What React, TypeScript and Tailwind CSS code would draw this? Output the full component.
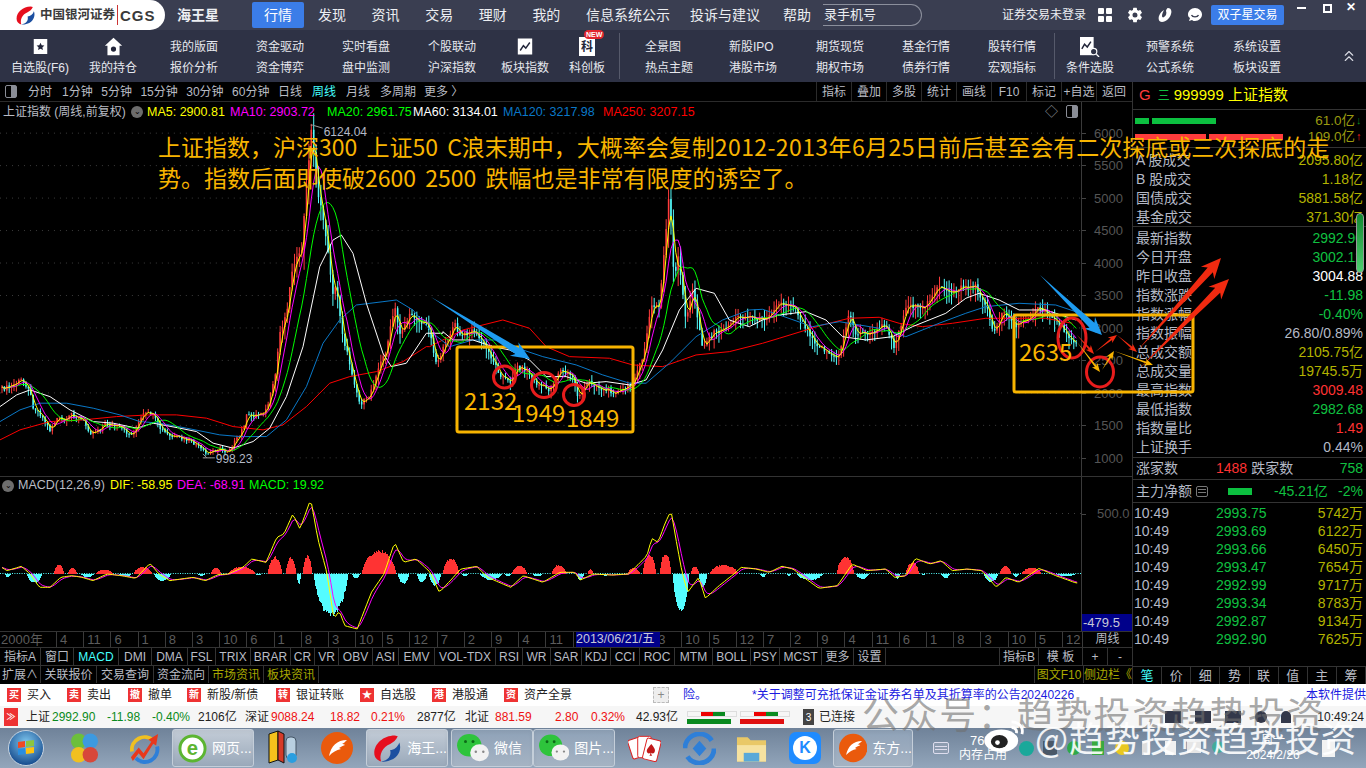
import { IoSettingsSharp } from "react-icons/io5";
import { ChevronsUp } from "lucide-react";

type Pt = [number, number];

// key points read from the chart, in page pixels
const seg = (ox: number, oy: number, pts: number[][]): Pt[] =>
  pts.map(([x, y]) => [ox + x / 3, oy + y / 3] as Pt);

const priceKeys: Pt[] = [
  ...seg(0, 120, [[0,810],[30,800],[65,780],[85,800],[100,860],[120,880],[150,930],[170,895],[200,905],[215,880],[250,905],[275,940],[320,910],[360,925],[395,945],[430,885],[455,880],[480,925],[510,950],[560,960],[590,975],[620,1005],[650,985],[680,995],[720,950],[740,890],[770,885],[800,870],[825,780],[840,640],[860,580],[880,430],[905,400],[920,200],[935,30],[955,220],[975,320],[1000,520],[1010,500],[1030,650],[1060,770],[1080,850],[1105,840],[1130,760],[1160,690],[1185,560],[1200,640],[1235,580],[1265,610],[1285,610],[1310,730]]),
  ...seg(430, 120, [[20,730],[40,690],[75,610],[90,650],[130,630],[160,670],[185,710],[210,760],[240,790],[260,740],[290,750],[320,790],[360,810],[390,750],[430,770],[445,830],[480,785],[520,810],[570,815],[600,800],[640,720],[665,560],[690,560],[720,210],[735,500],[745,400],[770,600],[790,510],[820,680],[850,640],[880,630],[925,590],[960,590],[1000,600]]),
  ...seg(780, 230, [[0,220],[45,225],[60,260],[110,340],[175,390],[210,250],[230,310],[280,310],[320,280],[345,350],[385,220],[430,240],[475,170],[510,190],[550,170],[590,170],[625,240],[645,310],[670,240],[710,290],[780,235],[820,260],[890,340]]),
];
const ma60Keys: Pt[] = [
  ...seg(0, 120, [[0,860],[50,825],[90,810],[150,830],[210,870],[280,905],[340,910],[410,925],[460,910],[540,925],[590,935],[640,970],[700,985],[760,965],[810,925],[860,830],[910,680],[960,440],[1000,360],[1025,345],[1060,400],[1100,550],[1150,700],[1175,740],[1220,730],[1280,640],[1330,640]]),
  ...seg(430, 120, [[40,635],[70,660],[130,660],[190,680],[240,690],[300,720],[350,770],[410,770],[470,790],[530,785],[600,795],[650,780],[700,690],[750,570],[800,505],[855,520],[900,600],[960,620],[1000,600]]),
  ...seg(780, 230, [[0,255],[80,245],[140,270],[190,320],[260,330],[340,320],[400,290],[500,250],[560,205],[600,190],[660,210],[720,240],[800,240],[890,270]]),
];
const ma120Keys: Pt[] = [
  ...seg(0, 120, [[0,905],[60,870],[120,850],[200,850],[280,865],[360,885],[420,905],[480,910],[560,925],[660,945],[720,950],[800,950],[860,900],[920,800],[970,670],[1020,600],[1070,555],[1150,545],[1190,540],[1240,570],[1300,640]]),
  ...seg(430, 120, [[60,680],[130,660],[200,660],[280,690],[340,710],[440,735],[520,765],[600,790],[650,790],[720,730],[800,650],[880,600],[960,570],[1000,568]]),
  ...seg(780, 230, [[0,255],[100,290],[180,275],[300,295],[380,320],[480,280],[560,250],[620,230],[720,220],[830,225],[890,245]]),
];
const ma250Keys: Pt[] = [
  ...seg(0, 120, [[0,960],[60,930],[150,905],[250,900],[350,890],[450,885],[530,885],[620,895],[700,920],[790,930],[850,915],[920,860],[990,790],[1050,770],[1130,755],[1210,725],[1280,680]]),
  ...seg(430, 120, [[0,680],[100,630],[220,600],[300,625],[350,680],[420,710],[540,715],[610,735],[700,740],[800,705],[900,695],[1000,670]]),
  ...seg(780, 230, [[0,325],[130,285],[210,265],[300,262],[360,280],[430,290],[520,280],[620,265],[800,265],[880,280]]),
];

const lerp = (keys: Pt[], x: number) => {
  if (x <= keys[0][0]) return keys[0][1];
  for (let i = 1; i < keys.length; i++) {
    if (x <= keys[i][0]) {
      const [x0, y0] = keys[i - 1];
      const [x1, y1] = keys[i];
      return y0 + ((y1 - y0) * (x - x0)) / (x1 - x0 || 1);
    }
  }
  return keys[keys.length - 1][1];
};
const rnd = (i: number) => {
  const v = Math.sin(i * 12.9898) * 43758.5453;
  return v - Math.floor(v);
};
const toPath = (pts: Pt[]) =>
  "M" + pts.map(([x, y]) => `${x.toFixed(1)} ${y.toFixed(1)}`).join("L");

const STEP = 2.4;
const END = 1078;
const xs: number[] = [];
for (let x = 2; x < END; x += STEP) xs.push(x);
const closes = xs.map((x, i) => lerp(priceKeys, x) + (rnd(i) - 0.5) * 5);
const sma = (n: number): Pt[] =>
  xs.map((x, i) => {
    const a = Math.max(0, i - n + 1);
    const part = closes.slice(a, i + 1);
    return [x, part.reduce((s, v) => s + v, 0) / part.length] as Pt;
  });
const candles = xs.map((x, i) => {
  const close = closes[i];
  const open = i > 0 ? closes[i - 1] : close;
  const vol = 3 + Math.min(14, (440 - close) / 20);
  return {
    x,
    close,
    open,
    high: Math.min(open, close) - rnd(i + 50) * vol,
    low: Math.max(open, close) + rnd(i + 90) * vol * 1.4,
    up: close <= open,
  };
});

const gridYs = [133, 165.5, 198, 230.5, 263, 295.5, 328, 360.5, 393, 425.5, 458];
const axisLabels = ["6000", "5500", "5000", "4500", "4000", "3500", "3000", "2500", "2000", "1500", "1000"];

// MACD, read from the lower pane
const difKeys: Pt[] = [
  ...[[0,262],[20,275],[60,262],[85,285],[110,325],[140,325],[170,295],[200,290],[230,295],[260,305],[300,285],[340,290],[380,298],[420,253],[445,285],[475,305],[540,295],[575,305],[610,287],[640,285],[680,265],[705,240],[745,250],[775,175],[795,165],[820,105],[840,150],[870,60],[890,180],[915,280],[935,420],[950,395],[965,440],[1000,450],[1040,340],[1075,285],[1105,190],[1130,250],[1165,240],[1205,280],[1230,340],[1265,300],[1290,270],[1335,262],[1365,295],[1430,325],[1465,290],[1520,310],[1568,280]].map(([x, y]) => [x / 2.8, 480 + y / 3] as Pt),
  ...[[40,280],[55,303],[90,285],[140,288],[185,285],[210,258],[235,230],[248,178],[265,190],[285,130],[300,95],[315,190],[330,280],[345,340],[375,295],[393,358],[430,320],[470,285],[490,265],[530,270],[565,280],[600,262],[630,270],[665,300],[700,328],[750,320],[790,255],[830,275],[880,270],[905,295],[935,290],[960,238],[1000,255],[1030,245],[1060,275],[1100,270],[1140,275],[1180,325],[1205,295],[1240,310],[1295,268],[1340,290],[1395,312]].map(([x, y]) => [560 + x / 2.703, 480 + y / 3] as Pt),
];
const difPts: Pt[] = xs.map((x) => [x, lerp(difKeys, x)] as Pt);
const deaPts: Pt[] = [];
difPts.forEach(([x, y], i) => {
  deaPts.push([x, i === 0 ? y : deaPts[i - 1][1] + (y - deaPts[i - 1][1]) * 0.45]);
});
const humps: [number, number, number][] = [
  [54,64,9],[68,77,6],[96,113,4],[134,152,7],[211,221,6],[229,255,7],[268,282,18],[286,296,17],[303,312,19],[362,396,24],[443,459,16],[512,527,8],[552,566,9],[588,593,5],[628,640,6],[643,656,20],[660,671,21],[691,699,8],[710,738,9],[837,854,18],[906,919,12],[1000,1011,8],[1022,1041,6],
  [5,11,-4],[27,42,-10],[81,94,-4],[118,132,-3],[154,171,-8],[198,205,-3],[255,262,-2],[297,301,-11],[314,348,-44],[352,360,-5],[398,409,-11],[417,427,-9],[429,441,-13],[462,468,-3],[480,502,-7],[505,511,-3],[532,543,-3],[577,584,-7],[603,608,-3],[673,689,-40],[699,707,-15],[760,766,-4],[787,791,-3],[797,823,-7],[856,869,-6],[895,900,-6],[922,926,-2],[941,950,-5],[984,998,-9],[1013,1019,-4],[1056,1076,-3],
];
const histBars = humps.flatMap(([a, b, h], k) => {
  const out: { x: number; h: number }[] = [];
  for (let x = a; x < b; x += 1) {
    const t = (x - a + 0.5) / (b - a);
    const s = Math.pow(Math.sin(Math.PI * t), 0.6) * (0.85 + 0.15 * rnd(x * 3 + k));
    out.push({ x, h: h * s });
  }
  return out;
});

// tapered arrow, thin at the tail
const arrowPts = (x1: number, y1: number, x2: number, y2: number, w: number, hw: number, hl: number) => {
  const a = Math.atan2(y2 - y1, x2 - x1);
  const ux = Math.cos(a), uy = Math.sin(a);
  const nx = -uy, ny = ux;
  const bx = x2 - ux * hl, by = y2 - uy * hl;
  const nk = hl * 0.25;
  const p: Pt[] = [
    [x1, y1],
    [bx + nx * w, by + ny * w],
    [bx - ux * nk + nx * hw, by - uy * nk + ny * hw],
    [x2, y2],
    [bx - ux * nk - nx * hw, by - uy * nk - ny * hw],
    [bx - nx * w, by - ny * w],
  ];
  return p.map(([x, y]) => `${x.toFixed(1)},${y.toFixed(1)}`).join(" ");
};

function Swirl({ className }: { className: string }) {
  return (
    <svg viewBox="0 0 40 40" className={className}>
      <path d="M30 3C15 3 3 14 3 26c0 6 4 10 9 11-3-9 2-19 12-23 4-2 8-5 10-10z" fill="#e60f1e" />
      <path d="M36 12c3 8 0 17-8 22-6 3-12 4-16 3 9-1 14-7 12-15 5 0 10-4 12-10z" fill="#1c4fa0" />
    </svg>
  );
}

function ToolIcon({ kind }: { kind: string }) {
  if (kind === "star")
    return (
      <svg viewBox="0 0 20 20" className="h-[17px] w-[15px]">
        <rect x="1" y="0" width="18" height="20" fill="#fff" />
        <path d="M10 5l1.600 3.400 3.600.4-2.700 2.400.8 3.600L10 13l-3.300 1.800.8-3.600-2.700-2.400 3.600-.4z" fill="#23263a" />
      </svg>
    );
  if (kind === "home")
    return (
      <svg viewBox="0 0 22 22" className="h-[19px] w-[19px]">
        <path d="M11 1L1 10h3v11h14V10h3z" fill="#fff" />
        <circle cx="11" cy="14" r="3" fill="#23263a" />
      </svg>
    );
  if (kind === "chart")
    return (
      <svg viewBox="0 0 20 20" className="h-[19px] w-[16px]">
        <rect x="1" y="0" width="18" height="20" fill="#fff" />
        <path d="M4 15l4-6 3 3 5-7" stroke="#23263a" strokeWidth="1.800" fill="none" />
      </svg>
    );
  if (kind === "ke")
    return (
      <div className="relative flex h-[19px] w-[16px] items-center justify-center bg-white text-[12px] font-bold leading-none text-[#23263a]">
        科
        <span className="absolute left-[5px] top-[-7px] rounded-[5px] bg-[#e3262e] px-[2px] text-[7px] font-bold leading-[9px] text-white">NEW</span>
      </div>
    );
  return (
    <svg viewBox="0 0 22 22" className="h-[20px] w-[20px]">
      <rect x="0" y="0" width="15" height="20" fill="#fff" />
      <path d="M2 13l3-5 3 3 4-6" stroke="#23263a" strokeWidth="1.600" fill="none" />
      <circle cx="15" cy="16" r="3.500" fill="#2e3245" stroke="#fff" strokeWidth="1.300" />
      <path d="M18 19l3 3" stroke="#fff" strokeWidth="1.400" />
    </svg>
  );
}

const navItems = ["发现", "资讯", "交易", "理财", "我的"];
const periods = ["1分钟", "5分钟", "15分钟", "30分钟", "60分钟", "日线"];
const chartBtns = ["指标", "叠加", "多股", "统计", "画线", "F10", "标记", "+自选", "返回"];

const toolItems: { w: string; a: string; b?: string; icon?: string }[] = [
  { w: "w-[80px]", a: "自选股(F6)", icon: "star" },
  { w: "w-[66px]", a: "我的持仓", icon: "home" },
  { w: "w-[96px]", a: "我的版面", b: "报价分析" },
  { w: "w-[76px]", a: "资金驱动", b: "资金博弈" },
  { w: "w-[96px]", a: "实时看盘", b: "盘中监测" },
  { w: "w-[76px]", a: "个股联动", b: "沪深指数" },
  { w: "w-[70px]", a: "板块指数", icon: "chart" },
  { w: "w-[54px]", a: "科创板", icon: "ke" },
];
const toolItems2: { w: string; a: string; b: string }[] = [
  { w: "w-[98px]", a: "全景图", b: "热点主题" },
  { w: "w-[70px]", a: "新股IPO", b: "港股市场" },
  { w: "w-[104px]", a: "期货现货", b: "期权市场" },
  { w: "w-[68px]", a: "基金行情", b: "债券行情" },
];

const indicators: [string, string][] = [
  ["指标A", "w-[41px]"], ["窗口", "w-[33px]"], ["MACD", "w-[45px]"], ["DMI", "w-[33px]"], ["DMA", "w-[36px]"], ["FSL", "w-[28px]"], ["TRIX", "w-[35px]"], ["BRAR", "w-[40px]"], ["CR", "w-[24px]"], ["VR", "w-[24px]"], ["OBV", "w-[34px]"], ["ASI", "w-[26px]"], ["EMV", "w-[36px]"], ["VOL-TDX", "w-[61px]"], ["RSI", "w-[27px]"], ["WR", "w-[28px]"], ["SAR", "w-[31px]"], ["KDJ", "w-[29px]"], ["CCI", "w-[29px]"], ["ROC", "w-[35px]"], ["MTM", "w-[38px]"], ["BOLL", "w-[38px]"], ["PSY", "w-[29px]"], ["MCST", "w-[42px]"], ["更多", "w-[32px]"], ["设置", "w-[32px]"],
];
const ticksA = ["4", "11", "6", "1", "8", "3", "10", "6", "1", "8", "3", "10", "5", "12", "7", "2", "9", "4", "11", "", "", ""];
const ticksB = ["3", "10", "5", "12", "7", "2", "9", "4", "11", "6", "1", "8", "3", "10", "5", "12"];

const OLIVE = "text-[#b3b300]";
const GREEN = "text-[#10c040]";
const RED = "text-[#ff3232]";
const GREY = "text-[#b4b9c6]";

const rowsA: [string, string, string][] = [
  ["A 股成交", "2095.80亿", OLIVE],
  ["B 股成交", "1.18亿", OLIVE],
  ["国债成交", "5881.58亿", OLIVE],
  ["基金成交", "371.30亿", OLIVE],
];
const rowsB: [string, string, string][] = [
  ["最新指数", "2992.90", GREEN],
  ["今日开盘", "3002.12", GREEN],
  ["昨日收盘", "3004.88", "text-white"],
  ["指数涨跌", "-11.98", GREEN],
  ["指数涨幅", "-0.40%", GREEN],
  ["指数振幅", "26.80/0.89%", GREY],
  ["总成交额", "2105.75亿", OLIVE],
  ["总成交量", "19745.5万", OLIVE],
  ["最高指数", "3009.48", RED],
  ["最低指数", "2982.68", GREEN],
  ["指数量比", "1.49", RED],
  ["上证换手", "0.44%", GREY],
];
const ticks: [string, string][] = [
  ["2993.75", "5742万"], ["2993.69", "6122万"], ["2993.66", "6450万"], ["2993.47", "7654万"],
  ["2992.99", "9717万"], ["2993.34", "8783万"], ["2992.87", "9134万"], ["2992.90", "7625万"],
];

function Row({ label, value, color }: { label: string; value: string; color: string }) {
  return (
    <div className="flex h-[19px] items-center justify-between pl-[3px] pr-[3px] text-[14px] leading-none">
      <span className={GREY}>{label}</span>
      <span className={color}>{value}</span>
    </div>
  );
}

function TopBar() {
  return (
    <div className="flex h-[30px] items-center bg-[#3a3e51] text-[14px] text-[#eceef2]">
      <div className="flex h-[30px] w-[165px] items-center rounded-r-[15px] bg-white pl-[15px] text-[#3a3a3a]">
        <Swirl className="h-[21px] w-[21px]" />
        <span className="ml-[4px] text-[12.500px] font-bold leading-none">中国银河证券</span>
        <span className="mx-[2px] h-[20px] w-px bg-[#c33]" />
        <span className="text-[15px] font-bold leading-none tracking-[1px]">CGS</span>
      </div>
      <span className="ml-[12px] text-[14px] font-bold">海王星</span>
      <div className="ml-[33px] flex h-[26px] w-[52px] items-center justify-center rounded-[2px] bg-[#3b7de8] text-white">行情</div>
      <div className="ml-[14px] flex gap-[25.600px]">
        {navItems.map((n) => (
          <span key={n}>{n}</span>
        ))}
        <span>信息系统公示</span>
      </div>
      <span className="ml-[20px]">投诉与建议</span>
      <span className="ml-[23px]">帮助</span>
      <div className="ml-[12px] flex h-[22px] w-[99px] items-center overflow-hidden rounded-r-[11px] border border-l-0 border-[#8b8f9c] pl-[1px] text-[13px]">
        录手机号
      </div>
      <span className="ml-[80px] text-[12px]">证券交易未登录</span>
      <svg viewBox="0 0 14 14" className="ml-[12px] h-[14px] w-[14px]" fill="#fff">
        <rect x="0" y="0" width="6" height="6" rx="1" />
        <rect x="8" y="0" width="6" height="6" rx="1" />
        <rect x="0" y="8" width="6" height="6" rx="1" />
        <rect x="8" y="8" width="6" height="6" rx="1" />
      </svg>
      <IoSettingsSharp className="ml-[15px] h-[16px] w-[16px] text-white" />
      <svg viewBox="0 0 16 16" className="ml-[14px] h-[16px] w-[16px]" fill="#fff">
        <path d="M11 1c3 0 4 3 3 6-1 4-5 8-9 8-3 0-4-3-3-6 1-3 3-5 5-6-1 2-2 4-2 6 0 1 1 2 2 1 2-1 3-4 2-6 0-1 1-3 2-3z" />
      </svg>
      <svg viewBox="0 0 16 16" className="ml-[14px] h-[16px] w-[16px]">
        <path d="M8 1c4 0 7 3 7 6.500S12 14 8 14c-1 0-2 0-3-1l-3 1 1-3C1.500 10 1 9 1 7.500 1 4 4 1 8 1z" fill="#fff" />
        <path d="M4.500 8c1 2.500 6 2.500 7 0" stroke="#3a3e51" strokeWidth="1.300" fill="none" />
      </svg>
      <div className="ml-[8px] flex h-[20px] w-[73px] items-center justify-center rounded-[2px] bg-[#3b7de8] text-[12px] text-white">双子星交易</div>
      <div className="ml-[13px] h-[2px] w-[9px] self-start mt-[7px] bg-white" />
      <div className="relative ml-[17px] h-[9px] w-[9px] self-start mt-[4px] border-2 border-white" />
      <span className="ml-[14px] self-start text-[12px] font-bold leading-[14px] text-white">✕</span>
    </div>
  );
}

function ToolBar() {
  const Cell = ({ w, a, b, icon }: { w: string; a: string; b?: string; icon?: string }) =>
    icon ? (
      <div className={`${w} flex h-[52px] flex-col items-center gap-[4px] whitespace-nowrap pt-[6px]`}>
        <div className="flex h-[21px] items-center">
          <ToolIcon kind={icon} />
        </div>
        <span className="leading-[14px]">{a}</span>
      </div>
    ) : (
      <div className={`${w} flex h-[52px] justify-center whitespace-nowrap pt-[10px]`}>
        <div className="flex flex-col items-start gap-[7px]">
          <span className="leading-[14px]">{a}</span>
          <span className="leading-[14px]">{b}</span>
        </div>
      </div>
    );
  return (
    <div className="flex h-[52px] items-center bg-[#2e3245] text-[12px] text-[#e6e8ee]">
      {toolItems.map((t) => (
        <Cell key={t.a} {...t} />
      ))}
      <div className="ml-[5px] h-[46px] w-px bg-[#565a6b]" />
      {toolItems2.map((t) => (
        <Cell key={t.a} {...t} />
      ))}
      <div className="ml-[10px] w-[84px]">
        <Cell w="w-[84px]" a="股转行情" b="宏观指标" />
      </div>
      <div className="h-[46px] w-px bg-[#565a6b]" />
      <Cell w="w-[70px]" a="条件选股" icon="search" />
      <Cell w="w-[90px]" a="预警系统" b="公式系统" />
      <Cell w="w-[84px]" a="系统设置" b="板块设置" />
      <ChevronsUp className="ml-[41px] h-[18px] w-[18px] text-[#d8dae2]" strokeWidth={1.5} />
    </div>
  );
}

function PeriodBar() {
  return (
    <div className="flex h-[20px] items-center border-b border-[#2b2b2b] text-[12px] text-[#b9bcc4]">
      <div className="ml-[5px] flex h-[13px] w-[12px] justify-end rounded-[2px] border border-[#8a8d96]">
        <div className="h-full w-[5px] bg-[#8a8d96]" />
      </div>
      <span className="ml-[11px]">分时</span>
      <div className="ml-[10px] flex gap-[8.500px]">
        {periods.map((p) => (
          <span key={p}>{p}</span>
        ))}
      </div>
      <span className="ml-[10px] text-[#4ff]">周线</span>
      <span className="ml-[10px]">月线</span>
      <span className="ml-[10px]">多周期</span>
      <span className="ml-[8px]">更多 〉</span>
      <div className="ml-auto flex h-full">
        {chartBtns.map((b) => (
          <div key={b} className="flex w-[35px] items-center justify-center whitespace-nowrap border-l border-[#2b2b2b]">
            {b}
          </div>
        ))}
        <div className="w-px" />
      </div>
    </div>
  );
}

function MainChart() {
  return (
    <div className="flex h-[375px] border-b border-[#333]">
      <div className="relative h-full w-[1082px] border-r border-[#3a3a3a]">
        <svg viewBox="0 102 1082 375" className="block h-[375px] w-[1081px]">
          {gridYs.map((y) => (
            <line key={y} x1="0" x2="1082" y1={y} y2={y} stroke="#3c3c3c" strokeDasharray="1 5" />
          ))}
          {candles.map((c, i) => (
            <g key={i}>
              <line x1={c.x} x2={c.x} y1={c.high} y2={c.low} stroke={c.up ? "#ff3c3c" : "#54fcfc"} strokeWidth="1" />
              <rect
                x={c.x - 0.75}
                y={Math.min(c.open, c.close)}
                width="1.500"
                height={Math.max(1, Math.abs(c.open - c.close))}
                fill={c.up ? "#ff3c3c" : "#54fcfc"}
              />
            </g>
          ))}
          <path d={toPath(ma250Keys)} stroke="#ff0000" fill="none" />
          <path d={toPath(ma120Keys)} stroke="#0a78c8" fill="none" />
          <path d={toPath(ma60Keys)} stroke="#ffffff" fill="none" />
          <path d={toPath(sma(13))} stroke="#00ff00" fill="none" />
          <path d={toPath(sma(6))} stroke="#ff00ff" fill="none" />
          <path d={toPath(sma(3))} stroke="#ffff00" fill="none" />
          <path d="M311 125h2l10 3" stroke="#9a9a9a" fill="none" />
          <path d="M207 458l-4-4m0 4h12" stroke="#9a9a9a" fill="none" />
          <text x="324" y="136" fontSize="12" fill="#b4b9c6">6124.04</text>
          <text x="216" y="463" fontSize="12" fill="#b4b9c6">998.23</text>
        </svg>
        <div className="absolute left-[3px] top-[1px] flex h-[18px] items-center whitespace-nowrap text-[12.500px]">
          <span className="w-[125px] text-[12px] text-[#b9bcc4]">上证指数 (周线,前复权)</span>
          <span className="ml-[3px] flex h-[12px] w-[12px] items-center justify-center rounded-full bg-[#6d6d6d] text-[8px] leading-none text-black">⌄</span>
          <span className="ml-[4px] w-[83px] text-[#ffff00]">MA5: 2900.81</span>
          <span className="w-[97px] text-[#ff00ff]">MA10: 2903.72</span>
          <span className="w-[86px] text-[#00ff00]">MA20: 2961.75</span>
          <span className="w-[90px] text-white">MA60: 3134.01</span>
          <span className="w-[100px] text-[#0a78c8]">MA120: 3217.98</span>
          <span className="text-[#ff0000]">MA250: 3207.15</span>
        </div>
        <div className="absolute right-[3px] top-[3px] flex items-center gap-[8px] text-[#8a8d96]">
          <span className="text-[13px] leading-none">◇</span>
          <div className="flex h-[13px] w-[12px] justify-end rounded-[2px] border border-[#8a8d96]">
            <div className="h-full w-[5px] bg-[#8a8d96]" />
          </div>
        </div>
      </div>
      <div className="flex w-[50px] flex-col pt-[15px] text-[13px] text-[#555]">
        {axisLabels.map((l) => (
          <div key={l} className="flex h-[32.500px] shrink-0 items-center">
            <div className="h-px w-[4px] bg-[#444]" />
            <span className="ml-[8px]">{l}</span>
          </div>
        ))}
      </div>
    </div>
  );
}

function MacdPane() {
  return (
    <div className="flex h-[154px]">
      <div className="relative h-full w-[1082px] border-r border-[#3a3a3a]">
        <svg viewBox="0 478 1081 154" className="block h-[154px] w-[1081px]">
          <line x1="0" x2="1081" y1="514.500" y2="514.500" stroke="#3c3c3c" strokeDasharray="1 5" />
          <line x1="0" x2="1081" y1="574.500" y2="574.500" stroke="#54fcfc" strokeDasharray="1 1.400" />
          {histBars.map((b, i) => (
            <rect
              key={i}
              x={b.x}
              y={b.h > 0 ? 574.5 - b.h : 574.5}
              width="1.200"
              height={Math.abs(b.h)}
              fill={b.h > 0 ? "#ff3333" : "#54fcff"}
              shapeRendering="crispEdges"
            />
          ))}
          <path d={toPath(deaPts)} stroke="#ff00ff" fill="none" />
          <path d={toPath(difPts)} stroke="#ffff00" fill="none" />
        </svg>
        <div className="absolute left-[2px] top-[1px] flex h-[15px] items-center whitespace-nowrap text-[12.500px]">
          <span className="flex h-[12px] w-[12px] items-center justify-center rounded-full bg-[#6d6d6d] text-[8px] leading-none text-black">⌄</span>
          <span className="ml-[4px] w-[92px] text-[#b9bcc4]">MACD(12,26,9)</span>
          <span className="w-[67px] text-[#ffff00]">DIF: -58.95</span>
          <span className="w-[72px] text-[#ff00ff]">DEA: -68.91</span>
          <span className="text-[#00ff00]">MACD: 19.92</span>
        </div>
      </div>
      <div className="flex w-[50px] flex-col text-[13px] text-[#555]">
        <div className="mt-[29px] flex h-[16px] items-center">
          <div className="h-px w-[4px] bg-[#444]" />
          <span className="ml-[11px]">500.0</span>
        </div>
        <div className="mt-auto flex h-[17px] items-center bg-[#00008a] pl-[1px] text-[#c8c8d8]">-479.5</div>
      </div>
    </div>
  );
}

function BottomTabs() {
  return (
    <>
      <div className="relative flex h-[17px] border-y border-[#333] text-[13px] leading-[15px] text-[#5c5c5c]">
        <div className="w-[56px] shrink-0 pl-[1px]">2000年</div>
        <div className="flex w-[1026px] overflow-hidden">
          {[...ticksA, ...ticksB].map((t, i) => (
            <div key={i} className="w-[27.200px] shrink-0 border-l border-[#3a3a3a] pl-[3px]">
              {t}
            </div>
          ))}
        </div>
        <div className="flex w-[50px] items-center justify-center border-l border-[#3a3a3a] text-[12px] text-[#b9bcc4]">周线</div>
        <div className="absolute left-[576px] top-0 h-[15px] w-[84px] whitespace-nowrap bg-[#00008a] text-[12.500px] text-[#c8c8d8]">2013/06/21/五</div>
      </div>
      <div className="flex h-[18px] border-b border-[#333] text-[12px] text-[#b9bcc4]">
        {indicators.map(([l, w]) => (
          <div key={l} className={`${w} flex items-center justify-center whitespace-nowrap border-r border-[#333] ${l === "MACD" ? "text-[#4ff]" : ""}`}>
            {l}
          </div>
        ))}
        <div className="flex-1" />
        <div className="flex w-[39px] items-center justify-center border-l border-[#333]">指标B</div>
        <div className="flex w-[44px] items-center justify-center border-l border-[#333]">模 板</div>
        <div className="flex w-[25px] items-center justify-center border-l border-[#333]">+</div>
        <div className="flex w-[25px] items-center justify-center border-l border-[#333]">-</div>
      </div>
      <div className="flex h-[17px] text-[12px] text-[#b9bcc4]">
        <div className="flex w-[41px] items-center justify-center border-r border-[#333]">扩展∧</div>
        <div className="flex w-[56px] items-center justify-center border-r border-[#333]">关联报价</div>
        <div className="flex w-[57px] items-center justify-center border-r border-[#333]">交易查询</div>
        <div className="flex w-[55px] items-center justify-center border-r border-[#333]">资金流向</div>
        <div className="flex w-[55px] items-center justify-center border-r border-[#333] text-[#a8a800]">市场资讯</div>
        <div className="flex w-[55px] items-center justify-center border-r border-[#333] text-[#a8a800]">板块资讯</div>
        <div className="flex-1" />
        <div className="flex w-[49px] items-center justify-center whitespace-nowrap border-l border-[#333] text-[#a8a800]">图文F10</div>
        <div className="flex w-[49px] items-center justify-center whitespace-nowrap border-l border-[#333] text-[#a8a800]">侧边栏《</div>
      </div>
    </>
  );
}

function SidePanel() {
  return (
    <div className="flex w-[234px] flex-col border-l border-[#333] bg-black">
      <div className="flex h-[28px] items-center border-b border-[#333] text-[15px]">
        <span className="ml-[6px] text-[#ff3c3c]">G</span>
        <span className="ml-[7px] text-[12px] text-[#10c040]">三</span>
        <span className="ml-[4px] text-[#ffff00]">999999 上证指数</span>
      </div>
      <div className="flex h-[38px] flex-col border-b border-[#333] px-[2px] text-[13.500px] leading-none">
        <div className="mt-[2px] flex h-[17px] items-center">
          <div className="h-[6px] w-[14px] bg-[#0cc040]" />
          <div className="ml-[3px] h-[6px] w-[64px] bg-[#0cc040]" />
          <span className="ml-auto text-[#9a9a10]">61.0亿</span>
          <span className="ml-[1px] w-[8px] text-[11px] font-bold text-[#0a8a20]">↓</span>
        </div>
        <div className="flex h-[15px] items-center">
          <div className="h-[6px] w-[71px] bg-[#ff3c3c]" />
          <div className="ml-[3px] h-[6px] w-[74px] bg-[#ff3c3c]" />
          <span className="ml-auto text-[#9a9a10]">109.0亿</span>
          <span className="ml-[1px] w-[8px] text-[11px] font-bold text-[#ff2020]">↑</span>
        </div>
      </div>
      <div className="flex h-[79px] flex-col border-b border-[#333] pt-[2px]">
        {rowsA.map(([l, v, c]) => (
          <Row key={l} label={l} value={v} color={c} />
        ))}
      </div>
      <div className="flex h-[231px] flex-col border-b border-[#333] pt-[1px]">
        {rowsB.map(([l, v, c]) => (
          <Row key={l} label={l} value={v} color={c} />
        ))}
      </div>
      <div className="flex h-[22px] items-center border-b border-[#333] px-[3px] text-[14px]">
        <span className={GREY}>涨家数</span>
        <span className={`ml-[38px] ${RED}`}>1488</span>
        <span className={`ml-[4px] ${GREY}`}>跌家数</span>
        <span className={`ml-auto ${GREEN}`}>758</span>
      </div>
      <div className="flex h-[23px] items-center border-b border-[#333] px-[3px] text-[14px]">
        <span className={GREY}>主力净额</span>
        <div className="ml-[4px] flex h-[11px] w-[12px] flex-col justify-evenly rounded-[2px] border border-[#777] px-[1px]">
          <div className="h-px bg-[#777]" />
          <div className="h-px bg-[#777]" />
        </div>
        <div className="ml-[20px] h-[7px] w-[24px] bg-[#0cc040]" />
        <span className={`ml-[22px] ${GREEN}`}>-45.21亿</span>
        <span className={`ml-auto ${GREEN}`}>-2%</span>
      </div>
      <div className="flex flex-col pt-[1px]">
        {ticks.map(([p, v]) => (
          <div key={p + v} className="flex h-[18px] items-center text-[14px] leading-none">
            <span className={`w-[83px] pl-[1px] ${GREY}`}>10:49</span>
            <span className={GREEN}>{p}</span>
            <span className={`ml-auto pr-[3px] ${OLIVE}`}>{v}</span>
          </div>
        ))}
      </div>
      <div className="mt-auto flex h-[18px] border-t border-[#333] text-[13px] text-[#b9bcc4]">
        {["笔", "价", "细", "势", "联", "值", "主", "筹"].map((t, i) => (
          <div key={t} className={`flex flex-1 items-center justify-center border-r border-[#333] ${i === 0 ? "text-[#4ff]" : ""}`}>
            {t}
          </div>
        ))}
      </div>
    </div>
  );
}

function ActionStrip() {
  const Btn = ({ ch, label, cls }: { ch: string; label: string; cls: string }) => (
    <div className={`flex items-center ${cls}`}>
      <span className="flex h-[14px] w-[14px] items-center justify-center bg-[#ee3333] text-[10px] font-bold leading-none text-white">{ch}</span>
      <span className="ml-[6px] whitespace-nowrap">{label}</span>
    </div>
  );
  return (
    <div className="h-[44px] bg-[#f6f6f6] text-[12px] text-[#222]">
      <div className="flex h-[22px] items-center bg-white pl-[7px]">
        <Btn ch="买" label="买入" cls="w-[60px]" />
        <Btn ch="卖" label="卖出" cls="w-[61px]" />
        <Btn ch="撤" label="撤单" cls="w-[59px]" />
        <Btn ch="新" label="新股/新债" cls="w-[89px]" />
        <Btn ch="转" label="银证转账" cls="w-[84px]" />
        <Btn ch="★" label="自选股" cls="w-[72px]" />
        <Btn ch="港" label="港股通" cls="w-[72px]" />
        <Btn ch="资" label="资产全景" cls="w-[149px]" />
        <div className="flex h-[16px] w-[16px] items-center justify-center border border-dashed border-[#bbb] bg-[#eee] text-[#888]">+</div>
        <span className="ml-[14px] text-[#1a1ae0]">险。</span>
        <span className="ml-[45px] whitespace-nowrap text-[#1a1ae0]">*关于调整可充抵保证金证券名单及其折算率的公告20240226</span>
        <span className="ml-auto whitespace-nowrap text-[#1a1ae0]">本软件提供</span>
      </div>
      <div className="flex h-[22px] items-center whitespace-nowrap">
        <div className="ml-[4px] flex h-[18px] w-[14px] items-center justify-center bg-[#ee3333] text-[9px] font-bold leading-none text-white">≫</div>
        <span className="ml-[8px] w-[26px]">上证</span>
        <span className="w-[55px] text-[#0a8a20]">2992.90</span>
        <span className="w-[45px] text-[#0a8a20]">-11.98</span>
        <span className="w-[46px] text-[#0a8a20]">-0.40%</span>
        <span className="w-[47px]">2106亿</span>
        <span className="w-[26px]">深证</span>
        <span className="w-[59px] text-[#ee1111]">9088.24</span>
        <span className="w-[41px] text-[#ee1111]">18.82</span>
        <span className="w-[46px] text-[#ee1111]">0.21%</span>
        <span className="w-[48px]">2877亿</span>
        <span className="w-[30px]">北证</span>
        <span className="w-[60px] text-[#ee1111]">881.59</span>
        <span className="w-[36px] text-[#ee1111]">2.80</span>
        <span className="w-[45px] text-[#ee1111]">0.32%</span>
        <span className="w-[51px]">42.93亿</span>
        <div className="flex w-[116px] gap-[3px]">
          <LevelBars a="bg-[#0a8a20]" />
          <LevelBars a="bg-[#e01010]" />
        </div>
        <span className="flex h-[16px] w-[11px] items-center justify-center bg-[#444] text-[10px] text-white">3</span>
        <span className="ml-[5px]">已连接</span>
        <div className="ml-[310px] flex items-center gap-[14px]">
          <div className="h-[12px] w-[16px] bg-[#33384a]" />
          <div className="h-[12px] w-[16px] bg-[#33384a]" />
          <div className="h-[12px] w-[16px] bg-[#33384a]" />
          <div className="h-[12px] w-[12px] rounded-full bg-[#33384a]" />
          <div className="h-[12px] w-[10px] rounded-t-full bg-[#33384a]" />
        </div>
        <span className="ml-auto pr-[2px]">10:49:24</span>
      </div>
    </div>
  );
}

function LevelBars({ a }: { a: string }) {
  return (
    <div className="w-[50px]">
      <div className="flex h-[6px] border border-[#ddd]">
        <div className="w-[13px]" />
        <div className="w-[12px] bg-[#ee0000]" />
        <div className="w-[12px] bg-[#0a8a20]" />
      </div>
      <div className={`mt-[2px] h-[5px] w-[44px] ${a}`} />
    </div>
  );
}

function LeafIcon() {
  return (
    <svg viewBox="0 0 30 32" className="h-[32px] w-[29px]">
      <ellipse cx="9" cy="9" rx="8" ry="8" fill="#6cbf3c" />
      <ellipse cx="21" cy="9" rx="8" ry="8" fill="#3d9ae0" />
      <ellipse cx="9" cy="23" rx="8" ry="8" fill="#f0c020" />
      <ellipse cx="21" cy="23" rx="8" ry="8" fill="#d8483a" />
    </svg>
  );
}
function WeChat() {
  return (
    <svg viewBox="0 0 34 32" className="h-[30px] w-[32px]">
      <ellipse cx="13" cy="13" rx="13" ry="12" fill="#2ec43c" />
      <circle cx="9" cy="9" r="1.600" fill="#0d6a18" />
      <circle cx="17" cy="9" r="1.600" fill="#0d6a18" />
      <ellipse cx="24" cy="21" rx="10" ry="9" fill="#f2f2f2" />
      <circle cx="20" cy="20" r="1.300" fill="#888" />
      <circle cx="28" cy="20" r="1.300" fill="#888" />
    </svg>
  );
}
function OrangeIcon() {
  return (
    <svg viewBox="0 0 32 32" className="h-[32px] w-[32px]">
      <circle cx="16" cy="16" r="16" fill="#ea5a0c" />
      <path d="M8 24C10 14 16 8 26 8c-2 2-3 3-5 4 1 0 2 0 3 1-3 1-4 2-6 3 1 0 1 1 2 1-5 1-8 3-12 7z" fill="#fff" />
    </svg>
  );
}

function TaskBtn({ w, active, icon, label }: { w: string; active?: boolean; icon: React.ReactNode; label: string }) {
  return (
    <div className={`${w} flex h-[38px] items-center gap-[5px] rounded-[3px] border border-[#c4ced9] pl-[5px] shadow-inner ${active ? "bg-linear-to-b from-[#c3ccd7] to-[#9aa9ba]" : "bg-linear-to-b from-[#8fa2b8] to-[#a5b3c3]"}`}>
      {icon}
      <span className="whitespace-nowrap text-[14px] text-white">{label}</span>
    </div>
  );
}

function TaskBar() {
  const tray = ["h-[15px] w-[15px] rounded-full bg-[#1aa89a]", "h-[14px] w-[14px] bg-[#4a5868]", "h-[14px] w-[14px] rounded-full bg-[#2ea84a]", "h-[14px] w-[12px] bg-[#3aaa40]", "h-[14px] w-[14px] rounded-full bg-[#e8c820]", "h-[14px] w-[8px] bg-[#ddd]", "h-[14px] w-[11px] bg-[#f0f0f0]", "h-[12px] w-[14px] bg-[#e6e6e6]", "h-[12px] w-[12px] rounded-full bg-[#4a9]"];
  return (
    <div className="flex h-[40px] items-center bg-linear-to-b from-[#6f8299] to-[#93a6bb]">
      <div className="flex w-[52px] justify-center">
        <svg viewBox="0 0 36 36" className="h-[36px] w-[36px]">
          <defs>
            <radialGradient id="orb" cx="50%" cy="35%" r="65%">
              <stop offset="0" stopColor="#7fc8f0" />
              <stop offset="1" stopColor="#14498c" />
            </radialGradient>
          </defs>
          <circle cx="18" cy="18" r="17.500" fill="url(#orb)" stroke="#c8d4e0" />
          <path d="M10 12l7-1v6l-7 1z" fill="#f04a24" />
          <path d="M18 11l8-1v6l-8 1z" fill="#8cc63f" />
          <path d="M10 19l7-1v6l-7 1z" fill="#2a8ee0" />
          <path d="M18 18l8-1v6l-8 1z" fill="#ffc20e" />
        </svg>
      </div>
      <div className="flex w-[64px] justify-center">
        <LeafIcon />
      </div>
      <div className="flex w-[56px] justify-center">
        <svg viewBox="0 0 34 34" className="h-[33px] w-[33px]">
          <path d="M4 20A13 13 0 0 1 26 9" stroke="#f0c020" strokeWidth="4" fill="none" />
          <path d="M30 15A13 13 0 0 1 8 27" stroke="#2f7fd8" strokeWidth="4" fill="none" />
          <path d="M3 26l8-10 5 6 8-12-3-2 10-6-2 12-3-2-10 16-5-6-6 8z" fill="#e8381c" />
        </svg>
      </div>
      <TaskBtn
        w="w-[82px]"
        active
        icon={
          <svg viewBox="0 0 30 30" className="h-[29px] w-[29px]">
            <circle cx="15" cy="15" r="13" fill="#fff" stroke="#5cb531" strokeWidth="3" />
            <text x="15" y="22" textAnchor="middle" fontSize="21" fontWeight="bold" fill="#5cb531">e</text>
          </svg>
        }
        label="网页..."
      />
      <div className="flex w-[58px] justify-center">
        <svg viewBox="0 0 30 36" className="h-[36px] w-[30px]">
          <path d="M1 4l9-3v29l-9 3z" fill="#f6c21c" stroke="#111" />
          <path d="M10 1l6 3v29l-6-3z" fill="#d63a28" stroke="#111" />
          <rect x="18" y="7" width="10" height="22" rx="4" fill="#b9cfe0" stroke="#456" />
          <circle cx="24" cy="28" r="5" fill="#2a9ee0" />
        </svg>
      </div>
      <div className="flex w-[50px] justify-center">
        <OrangeIcon />
      </div>
      <div className="ml-[4px]">
        <TaskBtn w="w-[82px]" active icon={<Swirl className="h-[31px] w-[31px]" />} label="海王..." />
      </div>
      <div className="ml-[3px] flex">
        <TaskBtn w="w-[82px]" icon={<WeChat />} label="微信" />
        <TaskBtn w="w-[82px]" icon={<WeChat />} label="图片..." />
      </div>
      <div className="flex w-[58px] justify-center">
        <svg viewBox="0 0 34 32" className="h-[32px] w-[33px]">
          <rect x="2" y="6" width="14" height="20" rx="2" fill="#fff" stroke="#d22" transform="rotate(-18 9 16)" />
          <rect x="10" y="4" width="14" height="22" rx="2" fill="#fff" stroke="#d22" />
          <rect x="17" y="7" width="15" height="22" rx="2" fill="#fff" stroke="#d22" transform="rotate(14 25 18)" />
          <path d="M24 12c3 4 5 6 3 9-1 1-2 1-3 0 0 1 0 2 1 3h-3c1-1 1-2 1-3-1 1-2 1-3 0-2-3 1-5 4-9z" fill="#c01818" />
        </svg>
      </div>
      <div className="flex w-[52px] justify-center">
        <svg viewBox="0 0 34 34" className="h-[33px] w-[33px]">
          <circle cx="17" cy="17" r="15" fill="none" stroke="#2e7fd8" strokeWidth="5" strokeDasharray="38 9" />
          <path d="M17 9l7 8-7 8-7-8z" fill="#2e7fd8" />
        </svg>
      </div>
      <div className="flex w-[52px] justify-center">
        <svg viewBox="0 0 32 30" className="h-[30px] w-[31px]">
          <path d="M1 4h11l3 3h16v22H1z" fill="#e9c867" />
          <rect x="1" y="12" width="30" height="17" fill="#f6e2a0" />
          <rect x="8" y="20" width="16" height="9" fill="#5aa9d8" />
        </svg>
      </div>
      <div className="flex w-[56px] justify-center">
        <div className="flex h-[32px] w-[32px] items-center justify-center rounded-[7px] bg-[#1f8bff]">
          <span className="flex h-[24px] w-[24px] items-center justify-center rounded-full bg-white text-[16px] font-bold leading-none text-[#1f8bff]">K</span>
        </div>
      </div>
      <TaskBtn w="w-[80px]" icon={<OrangeIcon />} label="东方..." />
      <div className="ml-[20px] flex h-[12px] w-[16px] flex-col justify-evenly rounded-[2px] border border-[#dde] bg-[#8d9cb0] px-[1px]">
        <div className="h-px bg-[#dde]" />
        <div className="h-px bg-[#dde]" />
      </div>
      <div className="ml-[10px] flex w-[48px] flex-col items-center text-[12px] leading-[15px] text-white">
        <span className="text-[13px]">76%</span>
        <span>内存占用</span>
      </div>
      <div className="ml-[7px] flex">
        {tray.map((c) => (
          <div key={c} className="flex w-[24px] justify-center">
            <div className={c} />
          </div>
        ))}
      </div>
      <div className="ml-[13px] flex w-[60px] flex-col items-center text-[12px] leading-[15px] text-white">
        <span>周一</span>
        <span>2024/2/26</span>
      </div>
      <div className="ml-[19px] h-[17px] w-[13px] bg-[#f2f2f2]" />
    </div>
  );
}

function Annotations() {
  return (
    <>
      <svg viewBox="0 0 1366 768" className="pointer-events-none absolute left-0 top-0 h-[768px] w-[1366px]">
        <rect x="457" y="347" width="176" height="85" rx="2" fill="none" stroke="#f8b400" strokeWidth="3" />
        <rect x="1014" y="315" width="179" height="77" rx="2" fill="none" stroke="#f8b400" strokeWidth="3" />
        <polygon points={arrowPts(431, 297, 530, 359, 3.500, 8, 15)} fill="#1e9bf0" />
        <polygon points={arrowPts(1040, 275, 1102, 335, 3.500, 8, 14)} fill="#1e9bf0" />
        <g fill="none" stroke="#e81c1c" strokeWidth="3">
          <circle cx="504.500" cy="377" r="11" />
          <circle cx="544" cy="385" r="12.500" />
          <circle cx="574" cy="395" r="10.500" />
          <ellipse cx="1072" cy="338" rx="14" ry="20" />
          <ellipse cx="1100" cy="372" rx="13.500" ry="15" />
        </g>
        <polygon points={arrowPts(1077, 335, 1094, 354, 1, 3.500, 7)} fill="#f02a10" />
        <polygon points={arrowPts(1095, 352, 1117, 335, 1, 3.500, 7)} fill="#f02a10" />
        <polygon points={arrowPts(1117, 335, 1137, 352, 1, 3.500, 7)} fill="#f02a10" />
        <polygon points={arrowPts(1137, 351, 1221, 258, 3.500, 9, 16)} fill="#f02a10" />
        <polygon points={arrowPts(1140, 368, 1229, 279, 3.500, 9, 16)} fill="#f02a10" />
        <polygon points={arrowPts(1077, 342, 1100, 372, 1, 3.500, 7)} fill="#f8b400" />
        <polygon points={arrowPts(1102, 370, 1114, 351, 1, 3.500, 7)} fill="#f8b400" />
        <polygon points={arrowPts(1114, 351, 1153, 365, 1, 3.500, 7)} fill="#f8b400" />
      </svg>
      <div className="absolute left-[158px] top-[131px] whitespace-nowrap font-['Noto_Sans_CJK_SC',sans-serif] text-[23px] leading-[31px] text-[#f8b400] [word-spacing:4px]">
        <div>
          上证指数，沪深300 上证50 C浪末期中，大概率会复制
          <span className="tracking-[0.4px]">2012-2013年6月25日</span>
          前后甚至会有二次探底或三次探底的走
        </div>
        <div>势。指数后面即使破2600 2500 跌幅也是非常有限度的诱空了。</div>
      </div>
      <span className="absolute left-[464px] top-[385px] font-['Noto_Sans_CJK_SC',sans-serif] text-[24px] leading-[30px] text-[#f8b400]">2132</span>
      <span className="absolute left-[512px] top-[397px] font-['Noto_Sans_CJK_SC',sans-serif] text-[24px] leading-[30px] text-[#f8b400]">1949</span>
      <span className="absolute left-[566px] top-[402px] font-['Noto_Sans_CJK_SC',sans-serif] text-[24px] leading-[30px] text-[#f8b400]">1849</span>
      <span className="absolute left-[1019px] top-[336px] font-['Noto_Sans_CJK_SC',sans-serif] text-[24px] leading-[30px] text-[#f8b400]">2635</span>
      {/* scroll thumb over the side panel */}
      <div className="absolute left-[1356px] top-[213px] h-[60px] w-[8px] rounded-[4px] border border-[#999] bg-linear-to-b from-[#0d8a30] to-[#4fd070]" />
      {/* watermarks */}
      <div className="absolute left-[862px] top-[691px] whitespace-nowrap font-['Noto_Sans_CJK_SC',sans-serif] text-[37px] leading-[44px] tracking-[1.600px] text-[#707070]/60">
        公众号：趋势投资趋势投资
      </div>
      <svg viewBox="0 0 46 34" className="absolute left-[983px] top-[720px] h-[32px] w-[44px]">
        <ellipse cx="19" cy="22" rx="18" ry="12" fill="#fff" />
        <ellipse cx="17" cy="23" rx="9" ry="7" fill="#222" />
        <circle cx="15" cy="24" r="2.500" fill="#fff" />
        <path d="M30 2c8 0 13 6 11 13M30 8c4 0 6 3 5 6" stroke="#fff" strokeWidth="3" fill="none" />
      </svg>
      <div className="absolute left-[1035px] top-[715px] whitespace-nowrap font-['Noto_Sans_CJK_SC',sans-serif] text-[35px] leading-[44px] tracking-[1px] text-white/90">
        @趋势投资趋势投资
      </div>
    </>
  );
}

export default function App() {
  return (
    <div className="relative flex h-[768px] w-[1366px] flex-col overflow-hidden bg-black font-['Liberation_Sans','Noto_Sans_CJK_SC',sans-serif]">
      <TopBar />
      <ToolBar />
      <div className="flex h-[602px]">
        <div className="flex w-[1132px] flex-col">
          <PeriodBar />
          <MainChart />
          <MacdPane />
          <BottomTabs />
        </div>
        <SidePanel />
      </div>
      <ActionStrip />
      <TaskBar />
      <Annotations />
    </div>
  );
}
